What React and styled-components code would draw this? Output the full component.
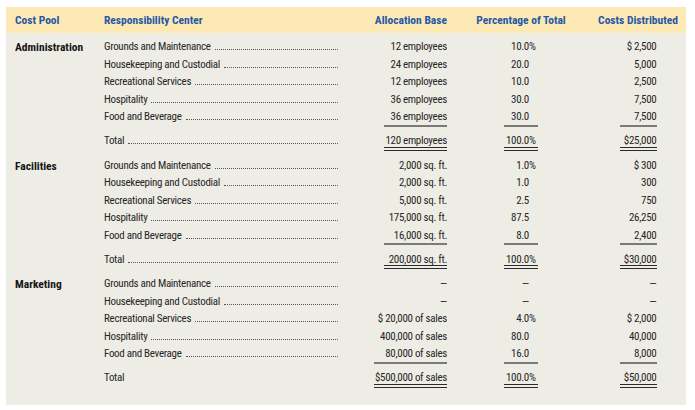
import React from 'react';
import styled, { createGlobalStyle } from 'styled-components';

const GlobalStyle = createGlobalStyle`
  body {
    margin: 0;
    background: #ffffff;
    font-family: "Roboto Condensed", "Liberation Sans Narrow", Roboto, "Liberation Sans", sans-serif;
  }
`;

const COLUMNS = '98px 241px 102px 148px 91px';

const Panel = styled.div`
  margin: 7px 0 0 6px;
  width: 680px;
  height: 398px;
  background: #eeede5;
`;

const HeaderBand = styled.div`
  display: grid;
  grid-template-columns: ${COLUMNS};
  align-items: center;
  height: 26px;
  background: #fde9b4;
  margin-bottom: 6px;
`;

const HeaderCell = styled.div`
  color: #2657a6;
  font-weight: 700;
  font-size: 11.5px;
  white-space: nowrap;
  text-align: ${props => props.$align || 'left'};
  padding-left: ${props => props.$first ? '9px' : '0'};
  padding-right: ${props => props.$last ? '5px' : '0'};
`;

const Section = styled.div`
  display: flex;
  flex-direction: column;
  margin-bottom: 7px;
`;

const Row = styled.div`
  display: grid;
  grid-template-columns: ${COLUMNS};
  height: 17.5px;
  margin-top: ${props => props.$total ? '6.5px' : '0'};
  font-size: 11px;
  letter-spacing: -0.3px;
  color: #262626;
`;

const PoolCell = styled.div`
  padding-left: 9px;
  font-weight: 700;
  font-size: 11.5px;
  letter-spacing: 0;
  color: #161616;
  line-height: 16px;
`;

const CenterCell = styled.div`
  display: flex;
  align-items: baseline;
  padding-right: 7px;
  line-height: 16px;
  white-space: nowrap;
`;

const Leader = styled.span`
  flex: 1;
  height: 0;
  margin-left: 4px;
  border-bottom: 1px dotted #555;
`;

const ValueCell = styled.div`
  display: flex;
  justify-content: ${props => props.$justify || 'center'};
  padding-right: ${props => props.$padRight || 0}px;
`;

const Amount = styled.div`
  box-sizing: border-box;
  display: flex;
  justify-content: flex-end;
  width: ${props => props.$width}px;
  height: 17.5px;
  line-height: 16px;
  white-space: nowrap;
  border-bottom: ${props =>
    props.$rule === 'single' ? '2px solid #7a7a7a' :
    props.$rule === 'double' ? '4px double #2a2a2a' : 'none'};
`;

const Suffix = styled.span`
  display: inline-block;
  width: 9px;
  text-align: left;
`;

const sections = [
  {
    pool: 'Administration',
    allocWidth: 63,
    rows: [
      ['Grounds and Maintenance', '12 employees', '10.0', '%', '$ 2,500'],
      ['Housekeeping and Custodial', '24 employees', '20.0', '', '5,000'],
      ['Recreational Services', '12 employees', '10.0', '', '2,500'],
      ['Hospitality', '36 employees', '30.0', '', '7,500'],
      ['Food and Beverage', '36 employees', '30.0', '', '7,500'],
    ],
    total: ['Total', '120 employees', '100.0', '%', '$25,000'],
    totalLeader: true,
  },
  {
    pool: 'Facilities',
    allocWidth: 63,
    rows: [
      ['Grounds and Maintenance', '2,000 sq. ft.', '1.0', '%', '$ 300'],
      ['Housekeeping and Custodial', '2,000 sq. ft.', '1.0', '', '300'],
      ['Recreational Services', '5,000 sq. ft.', '2.5', '', '750'],
      ['Hospitality', '175,000 sq. ft.', '87.5', '', '26,250'],
      ['Food and Beverage', '16,000 sq. ft.', '8.0', '', '2,400'],
    ],
    total: ['Total', '200,000 sq. ft.', '100.0', '%', '$30,000'],
    totalLeader: true,
  },
  {
    pool: 'Marketing',
    allocWidth: 73,
    rows: [
      ['Grounds and Maintenance', '—', '—', '', '—'],
      ['Housekeeping and Custodial', '—', '—', '', '—'],
      ['Recreational Services', '$ 20,000 of sales', '4.0', '%', '$ 2,000'],
      ['Hospitality', '400,000 of sales', '80.0', '', '40,000'],
      ['Food and Beverage', '80,000 of sales', '16.0', '', '8,000'],
    ],
    total: ['Total', '$500,000 of sales', '100.0', '%', '$50,000'],
    totalLeader: false,
  },
];

const LineItem = ({ pool, cells, allocWidth, rule, leader, total }) => {
  const [center, alloc, pct, suffix, cost] = cells;
  return (
    <Row $total={total}>
      <PoolCell>{pool}</PoolCell>
      <CenterCell>
        {center}
        {leader && <Leader />}
      </CenterCell>
      <ValueCell $justify="flex-end">
        <Amount $width={allocWidth} $rule={rule}>{alloc}</Amount>
      </ValueCell>
      <ValueCell>
        <Amount $width={34} $rule={rule}>
          {pct}
          <Suffix>{suffix}</Suffix>
        </Amount>
      </ValueCell>
      <ValueCell $padRight={5}>
        <Amount $width={37} $rule={rule}>{cost}</Amount>
      </ValueCell>
    </Row>
  );
};

export default function App() {
  return (
    <>
      <GlobalStyle />
      <Panel>
        <HeaderBand>
          <HeaderCell $first>Cost Pool</HeaderCell>
          <HeaderCell>Responsibility Center</HeaderCell>
          <HeaderCell $align="right">Allocation Base</HeaderCell>
          <HeaderCell $align="center">Percentage of Total</HeaderCell>
          <HeaderCell $align="center" $last>Costs Distributed</HeaderCell>
        </HeaderBand>
        {sections.map(section => (
          <Section key={section.pool}>
            {section.rows.map((cells, i) => (
              <LineItem
                key={cells[0]}
                pool={i === 0 ? section.pool : ''}
                cells={cells}
                allocWidth={section.allocWidth}
                rule={i === section.rows.length - 1 ? 'single' : null}
                leader
              />
            ))}
            <LineItem
              pool=""
              cells={section.total}
              allocWidth={section.allocWidth}
              rule="double"
              leader={section.totalLeader}
              total
            />
          </Section>
        ))}
      </Panel>
    </>
  );
}
